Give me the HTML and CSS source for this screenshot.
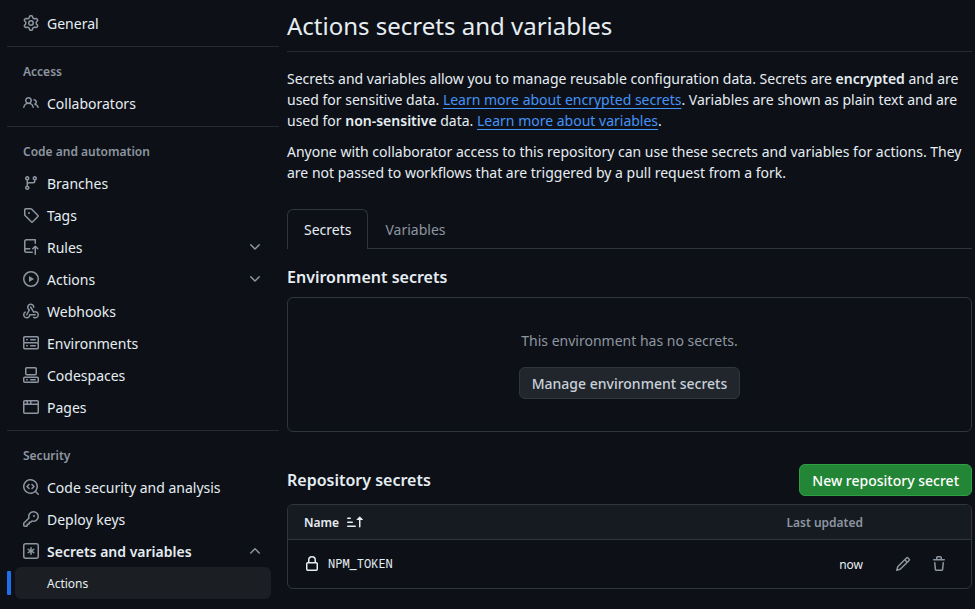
FILE: index.html
```html
<!DOCTYPE html>
<html lang="en">
<head>
<meta charset="utf-8">
<title>Actions secrets and variables</title>
<link rel="stylesheet" href="styles.css">
</head>
<body>
<div class="page">
  <nav class="sidebar">
    <ul class="group">
      <li class="item"><svg class="icon" viewBox="0 0 16 16"><path d="M8 0a8.2 8.2 0 0 1 .701.031C9.444.095 9.99.645 10.16 1.29l.288 1.107c.018.066.079.158.212.224.231.114.454.243.668.386.123.082.233.09.299.071l1.103-.303c.644-.176 1.392.021 1.82.63.27.385.506.792.704 1.218.315.675.111 1.422-.364 1.891l-.814.806c-.049.048-.098.147-.088.294.016.257.016.515 0 .772-.01.147.038.246.088.294l.814.806c.475.469.679 1.216.364 1.891a7.977 7.977 0 0 1-.704 1.217c-.428.61-1.176.807-1.82.63l-1.102-.302c-.067-.019-.177-.011-.3.071a5.909 5.909 0 0 1-.668.386c-.133.066-.194.158-.211.224l-.29 1.106c-.168.646-.715 1.196-1.458 1.26a8.006 8.006 0 0 1-1.402 0c-.743-.064-1.289-.614-1.458-1.26l-.289-1.106c-.018-.066-.079-.158-.212-.224a5.738 5.738 0 0 1-.668-.386c-.123-.082-.233-.09-.299-.071l-1.103.303c-.644.176-1.392-.021-1.82-.63a8.12 8.12 0 0 1-.704-1.218c-.315-.675-.111-1.422.363-1.891l.815-.806c.05-.048.098-.147.088-.294a6.214 6.214 0 0 1 0-.772c.01-.147-.038-.246-.088-.294l-.815-.806C.635 6.045.431 5.298.746 4.623a7.92 7.92 0 0 1 .704-1.217c.428-.61 1.176-.807 1.82-.63l1.102.302c.067.019.177.011.3-.071.214-.143.437-.272.668-.386.133-.066.194-.158.211-.224l.29-1.106C6.009.645 6.556.095 7.299.03 7.53.01 7.764 0 8 0Zm-.571 1.525c-.036.003-.108.036-.137.146l-.289 1.105c-.147.561-.549.967-.998 1.189-.173.086-.34.183-.5.29-.417.278-.97.423-1.529.27l-1.103-.303c-.109-.03-.175.016-.195.045-.22.312-.412.644-.573.99-.014.031-.021.11.059.19l.815.806c.411.406.562.957.53 1.456a4.709 4.709 0 0 0 0 .582c.032.499-.119 1.05-.53 1.456l-.815.806c-.081.08-.073.159-.059.19.162.346.353.677.573.989.02.03.085.076.195.046l1.102-.303c.56-.153 1.113-.008 1.53.27.161.107.328.204.501.29.447.222.85.629.997 1.189l.289 1.105c.029.109.101.143.137.146a6.6 6.6 0 0 0 1.142 0c.036-.003.108-.036.137-.146l.289-1.105c.147-.561.549-.967.998-1.189.173-.086.34-.183.5-.29.417-.278.97-.423 1.529-.27l1.103.303c.109.029.175-.016.195-.045.22-.313.411-.644.573-.99.014-.031.021-.11-.059-.19l-.815-.806c-.411-.406-.562-.957-.53-1.456a4.709 4.709 0 0 0 0-.582c-.032-.499.119-1.05.53-1.456l.815-.806c.081-.08.073-.159.059-.19a6.464 6.464 0 0 0-.573-.989c-.02-.03-.085-.076-.195-.046l-1.102.303c-.56.153-1.113.008-1.53-.27a4.44 4.44 0 0 0-.501-.29c-.447-.222-.85-.629-.997-1.189l-.289-1.105c-.029-.11-.101-.143-.137-.146a6.6 6.6 0 0 0-1.142 0ZM11 8a3 3 0 1 1-6 0 3 3 0 0 1 6 0ZM9.5 8a1.5 1.5 0 1 0-3.001.001A1.5 1.5 0 0 0 9.5 8Z"/></svg><span class="label">General</span></li>
    </ul>
    <h2 class="group-title">Access</h2>
    <ul class="group">
      <li class="item"><svg class="icon" viewBox="0 0 16 16"><path d="M2 5.5a3.5 3.5 0 1 1 5.898 2.549 5.508 5.508 0 0 1 3.034 4.084.75.75 0 1 1-1.482.235 4 4 0 0 0-7.9 0 .75.75 0 0 1-1.482-.236A5.507 5.507 0 0 1 3.102 8.05 3.493 3.493 0 0 1 2 5.5ZM11 4a3.001 3.001 0 0 1 2.22 5.018 5.01 5.01 0 0 1 2.56 3.012.749.749 0 0 1-.885.954.752.752 0 0 1-.549-.514 3.507 3.507 0 0 0-2.522-2.372.75.75 0 0 1-.574-.73v-.352a.75.75 0 0 1 .416-.672A1.5 1.5 0 0 0 11 5.5.75.75 0 0 1 11 4Zm-5.5-.5a2 2 0 1 0-.001 3.999A2 2 0 0 0 5.5 3.5Z"/></svg><span class="label">Collaborators</span></li>
    </ul>
    <h2 class="group-title">Code and automation</h2>
    <ul class="group">
      <li class="item"><svg class="icon" viewBox="0 0 16 16"><path d="M9.5 3.25a2.25 2.25 0 1 1 3 2.122V6A2.5 2.5 0 0 1 10 8.5H6a1 1 0 0 0-1 1v1.128a2.251 2.251 0 1 1-1.5 0V5.372a2.25 2.25 0 1 1 1.5 0v1.836A2.493 2.493 0 0 1 6 7h4a1 1 0 0 0 1-1v-.628A2.25 2.25 0 0 1 9.5 3.25Zm-6 0a.75.75 0 1 0 1.5 0 .75.75 0 0 0-1.5 0Zm8.25-.75a.75.75 0 1 0 0 1.5.75.75 0 0 0 0-1.5ZM4.25 12a.75.75 0 1 0 0 1.5.75.75 0 0 0 0-1.5Z"/></svg><span class="label">Branches</span></li>
      <li class="item"><svg class="icon" viewBox="0 0 16 16"><path d="M1 7.775V2.75C1 1.784 1.784 1 2.75 1h5.025c.464 0 .91.184 1.238.513l6.25 6.25a1.75 1.75 0 0 1 0 2.474l-5.026 5.026a1.75 1.75 0 0 1-2.474 0l-6.25-6.25A1.752 1.752 0 0 1 1 7.775Zm1.5 0c0 .066.026.13.073.177l6.25 6.25a.25.25 0 0 0 .354 0l5.025-5.025a.25.25 0 0 0 0-.354l-6.25-6.25a.25.25 0 0 0-.177-.073H2.75a.25.25 0 0 0-.25.25ZM6 5a1 1 0 1 1 0 2 1 1 0 0 1 0-2Z"/></svg><span class="label">Tags</span></li>
      <li class="item"><svg class="icon" viewBox="0 0 16 16"><path d="M1 2.5A2.5 2.5 0 0 1 3.5 0h8.75a.75.75 0 0 1 .75.75v3.5a.75.75 0 0 1-1.5 0V1.5h-8a1 1 0 0 0-1 1v6.708A2.493 2.493 0 0 1 3.5 9h3.25a.75.75 0 0 1 0 1.5H3.5a1 1 0 0 0 0 2h5.75a.75.75 0 0 1 0 1.5H3.5A2.5 2.5 0 0 1 1 11.5Zm13.23 7.79-1.224-1.224v6.184a.75.75 0 0 1-1.5 0V9.066L10.28 10.29a.75.75 0 0 1-1.06-1.061l2.505-2.504a.75.75 0 0 1 1.06 0L15.29 9.23a.751.751 0 0 1-.018 1.042.751.751 0 0 1-1.042.018Z"/></svg><span class="label">Rules</span><svg class="icon" viewBox="0 0 16 16"><path d="M12.78 5.22a.749.749 0 0 1 0 1.06l-4.25 4.25a.749.749 0 0 1-1.06 0L3.22 6.28a.749.749 0 1 1 1.06-1.06L8 8.939l3.72-3.719a.749.749 0 0 1 1.06 0Z"/></svg></li>
      <li class="item"><svg class="icon" viewBox="0 0 16 16"><path d="M8 0a8 8 0 1 1 0 16A8 8 0 0 1 8 0ZM1.5 8a6.5 6.5 0 1 0 13 0 6.5 6.5 0 0 0-13 0Zm4.879-2.773 4.264 2.559a.25.25 0 0 1 0 .428l-4.264 2.559A.25.25 0 0 1 6 10.559V5.442a.25.25 0 0 1 .379-.215Z"/></svg><span class="label">Actions</span><svg class="icon" viewBox="0 0 16 16"><path d="M12.78 5.22a.749.749 0 0 1 0 1.06l-4.25 4.25a.749.749 0 0 1-1.06 0L3.22 6.28a.749.749 0 1 1 1.06-1.06L8 8.939l3.72-3.719a.749.749 0 0 1 1.06 0Z"/></svg></li>
      <li class="item"><svg class="icon" viewBox="0 0 16 16"><path d="M5.5 4.25a2.25 2.25 0 0 1 4.5 0 .75.75 0 0 0 1.5 0 3.75 3.75 0 1 0-6.14 2.889l-2.272 4.258a.75.75 0 0 0 1.324.706L7 7.25a.75.75 0 0 0-.309-1.015A2.25 2.25 0 0 1 5.5 4.25Z"/><path d="M7.364 3.607a.75.75 0 0 1 1.03.257l2.608 4.349a3.75 3.75 0 1 1-.628 6.785.75.75 0 0 1 .752-1.299 2.25 2.25 0 1 0-.033-3.88.75.75 0 0 1-1.03-.256L7.107 4.636a.75.75 0 0 1 .257-1.03Z"/><path d="M2.9 8.776A.75.75 0 0 1 2.625 9.8 2.25 2.25 0 1 0 6 11.75a.75.75 0 0 1 .75-.751h5.5a.75.75 0 0 1 0 1.5H7.425a3.751 3.751 0 1 1-5.55-3.998.75.75 0 0 1 1.024.274Z"/></svg><span class="label">Webhooks</span></li>
      <li class="item"><svg class="icon" viewBox="0 0 16 16"><path d="M1.75 1h12.5c.966 0 1.75.784 1.75 1.75v4c0 .372-.116.717-.314 1 .198.283.314.628.314 1v4a1.75 1.75 0 0 1-1.75 1.75H1.75A1.75 1.75 0 0 1 0 12.75v-4c0-.358.109-.707.314-1a1.739 1.739 0 0 1-.314-1v-4C0 1.784.784 1 1.75 1ZM1.5 2.75v4c0 .138.112.25.25.25h12.5a.25.25 0 0 0 .25-.25v-4a.25.25 0 0 0-.25-.25H1.75a.25.25 0 0 0-.25.25Zm.25 5.75a.25.25 0 0 0-.25.25v4c0 .138.112.25.25.25h12.5a.25.25 0 0 0 .25-.25v-4a.25.25 0 0 0-.25-.25ZM7 4.75A.75.75 0 0 1 7.75 4h4.5a.75.75 0 0 1 0 1.5h-4.5A.75.75 0 0 1 7 4.75ZM7.75 10h4.5a.75.75 0 0 1 0 1.5h-4.5a.75.75 0 0 1 0-1.5ZM3 4.75A.75.75 0 0 1 3.75 4h.5a.75.75 0 0 1 0 1.5h-.5A.75.75 0 0 1 3 4.75ZM3.75 10h.5a.75.75 0 0 1 0 1.5h-.5a.75.75 0 0 1 0-1.5Z"/></svg><span class="label">Environments</span></li>
      <li class="item"><svg class="icon" viewBox="0 0 16 16"><path d="M0 11.25c0-.966.784-1.75 1.75-1.75h12.5c.966 0 1.75.784 1.75 1.75v3A1.75 1.75 0 0 1 14.25 16H1.75A1.75 1.75 0 0 1 0 14.25Zm2-9.5C2 .784 2.784 0 3.75 0h8.5C13.216 0 14 .784 14 1.75v5a1.75 1.75 0 0 1-1.75 1.75h-8.5A1.75 1.75 0 0 1 2 6.75Zm1.75-.25a.25.25 0 0 0-.25.25v5c0 .138.112.25.25.25h8.5a.25.25 0 0 0 .25-.25v-5a.25.25 0 0 0-.25-.25Zm-2 9.5a.25.25 0 0 0-.25.25v3c0 .138.112.25.25.25h12.5a.25.25 0 0 0 .25-.25v-3a.25.25 0 0 0-.25-.25Z"/><path d="M7 12.75a.75.75 0 0 1 .75-.75h4.5a.75.75 0 0 1 0 1.5h-4.5a.75.75 0 0 1-.75-.75Zm-4 0a.75.75 0 0 1 .75-.75h.5a.75.75 0 0 1 0 1.5h-.5a.75.75 0 0 1-.75-.75Z"/></svg><span class="label">Codespaces</span></li>
      <li class="item"><svg class="icon" viewBox="0 0 16 16"><path d="M0 2.75C0 1.784.784 1 1.75 1h12.5c.966 0 1.75.784 1.75 1.75v10.5A1.75 1.75 0 0 1 14.25 15H1.75A1.75 1.75 0 0 1 0 13.25ZM14.5 6h-13v7.25c0 .138.112.25.25.25h12.5a.25.25 0 0 0 .25-.25Zm-6-3.5v2h6V2.75a.25.25 0 0 0-.25-.25ZM5 2.5v2h2v-2Zm-3.25 0a.25.25 0 0 0-.25.25V4.5h2v-2Z"/></svg><span class="label">Pages</span></li>
    </ul>
    <h2 class="group-title">Security</h2>
    <ul class="group">
      <li class="item"><svg class="icon" viewBox="0 0 16 16"><path d="M8.47 4.97a.75.75 0 0 0 0 1.06L9.94 7.5 8.47 8.97a.75.75 0 1 0 1.06 1.06l2-2a.75.75 0 0 0 0-1.06l-2-2a.75.75 0 0 0-1.06 0ZM6.53 6.03a.75.75 0 0 0-1.06-1.06l-2 2a.75.75 0 0 0 0 1.06l2 2a.75.75 0 1 0 1.06-1.06L5.06 7.5l1.47-1.47Z"/><path d="M12.246 13.307a7.501 7.501 0 1 1 1.06-1.06l2.474 2.473a.749.749 0 0 1-.326 1.275.749.749 0 0 1-.734-.215ZM1.5 7.5a6.002 6.002 0 0 0 3.608 5.504 6.002 6.002 0 0 0 6.486-1.117.748.748 0 0 1 .292-.293A6 6 0 1 0 1.5 7.5Z"/></svg><span class="label">Code security and analysis</span></li>
      <li class="item"><svg class="icon" viewBox="0 0 16 16"><path d="M10.5 0a5.499 5.499 0 1 1-1.288 10.848l-.932.932a.749.749 0 0 1-.53.22H7v.75a.749.749 0 0 1-.22.53l-.5.5a.749.749 0 0 1-.53.22H5v.75a.749.749 0 0 1-.22.53l-.5.5a.749.749 0 0 1-.53.22h-2A1.75 1.75 0 0 1 0 14.25v-2c0-.199.079-.389.22-.53l4.932-4.932A5.5 5.5 0 0 1 10.5 0Zm-4 5.5c-.001.431.069.86.205 1.269a.75.75 0 0 1-.181.768L1.5 12.56v1.69c0 .138.112.25.25.25h1.69l.06-.06v-1.19a.75.75 0 0 1 .75-.75h1.19l.06-.06v-1.19a.75.75 0 0 1 .75-.75h1.19l1.023-1.025a.75.75 0 0 1 .768-.18A4 4 0 1 0 6.5 5.5ZM11 6a1 1 0 1 1 0-2 1 1 0 0 1 0 2Z"/></svg><span class="label">Deploy keys</span></li>
      <li class="item item-open"><svg class="icon" viewBox="0 0 16 16"><path d="M0 2.75A2.75 2.75 0 0 1 2.75 0h10.5A2.75 2.75 0 0 1 16 2.75v10.5A2.75 2.75 0 0 1 13.25 16H2.75A2.75 2.75 0 0 1 0 13.25ZM2.75 1.5c-.69 0-1.25.56-1.25 1.25v10.5c0 .69.56 1.25 1.25 1.25h10.5c.69 0 1.25-.56 1.25-1.25V2.75c0-.69-.56-1.25-1.25-1.25Z"/><path d="M8 4a.75.75 0 0 1 .75.75V6.7l1.69-.975a.75.75 0 0 1 .75 1.3L9.5 8l1.69.976a.75.75 0 0 1-.75 1.298L8.75 9.3v1.951a.75.75 0 0 1-1.5 0V9.299l-1.69.976a.75.75 0 0 1-.75-1.3L6.5 8l-1.69-.975a.75.75 0 0 1 .75-1.3l1.69.976V4.75A.75.75 0 0 1 8 4Z"/></svg><span class="label">Secrets and variables</span><svg class="icon" viewBox="0 0 16 16"><path d="M3.22 10.53a.749.749 0 0 1 0-1.06l4.25-4.25a.749.749 0 0 1 1.06 0l4.25 4.25a.749.749 0 1 1-1.06 1.06L8 6.811 4.28 10.53a.749.749 0 0 1-1.06 0Z"/></svg></li>
      <li class="subitem">Actions</li>
    </ul>
  </nav>

  <main class="main">
    <h1 class="title">Actions secrets and variables</h1>
    <p class="intro">Secrets and variables allow you to manage reusable configuration data. Secrets are <strong>encrypted</strong> and are used for sensitive data. <a href="#">Learn more about encrypted secrets</a>. Variables are shown as plain text and are used for <strong>non-sensitive</strong> data. <a href="#">Learn more about variables</a>.</p>
    <p class="intro">Anyone with collaborator access to this repository can use these secrets and variables for actions. They are not passed to workflows that are triggered by a pull request from a fork.</p>

    <div class="tabs">
      <div class="tab tab-selected">Secrets</div>
      <div class="tab">Variables</div>
    </div>

    <h3 class="section-title">Environment secrets</h3>
    <section class="blank">
      <p class="blank-text">This environment has no secrets.</p>
      <button class="btn">Manage environment secrets</button>
    </section>

    <div class="section-head">
      <h3 class="section-title">Repository secrets</h3>
      <button class="btn btn-primary">New repository secret</button>
    </div>
    <section class="table">
      <div class="row row-head">
        <div class="name">Name<svg class="icon" viewBox="0 0 16 16"><path d="m12.927 2.573 3 3A.25.25 0 0 1 15.75 6H13.5v6.75a.75.75 0 0 1-1.5 0V6H9.75a.25.25 0 0 1-.177-.427l3-3a.25.25 0 0 1 .354 0ZM0 12.25a.75.75 0 0 1 .75-.75h7.5a.75.75 0 0 1 0 1.5H.75a.75.75 0 0 1-.75-.75Zm0-4a.75.75 0 0 1 .75-.75h4.5a.75.75 0 0 1 0 1.5H.75A.75.75 0 0 1 0 8.25Zm0-4a.75.75 0 0 1 .75-.75h2.5a.75.75 0 0 1 0 1.5H.75A.75.75 0 0 1 0 4.25Z"/></svg></div>
        <div class="updated">Last updated</div>
        <div class="actions"></div>
      </div>
      <div class="row">
        <div class="name"><svg class="icon" viewBox="0 0 16 16"><path d="M4 4a4 4 0 0 1 8 0v2h.25c.966 0 1.75.784 1.75 1.75v5.5A1.75 1.75 0 0 1 12.25 15h-8.5A1.75 1.75 0 0 1 2 13.25v-5.5C2 6.784 2.784 6 3.75 6H4Zm8.25 3.5h-8.5a.25.25 0 0 0-.25.25v5.5c0 .138.112.25.25.25h8.5a.25.25 0 0 0 .25-.25v-5.5a.25.25 0 0 0-.25-.25ZM10.5 6V4a2.5 2.5 0 1 0-5 0v2Z"/></svg><code>NPM_TOKEN</code></div>
        <div class="updated">now</div>
        <div class="actions">
          <svg class="icon" viewBox="0 0 16 16"><path d="M11.013 1.427a1.75 1.75 0 0 1 2.474 0l1.086 1.086a1.75 1.75 0 0 1 0 2.474l-8.61 8.61c-.21.21-.47.364-.756.445l-3.251.93a.75.75 0 0 1-.927-.928l.929-3.25c.081-.286.235-.547.445-.758l8.61-8.61Zm.176 4.823L9.75 4.81l-6.286 6.287a.253.253 0 0 0-.064.108l-.558 1.953 1.953-.558a.253.253 0 0 0 .108-.064Zm1.238-3.763a.25.25 0 0 0-.354 0L10.811 3.75l1.439 1.44 1.263-1.263a.25.25 0 0 0 0-.354Z"/></svg>
          <svg class="icon" viewBox="0 0 16 16"><path d="M11 1.75V3h2.25a.75.75 0 0 1 0 1.5H2.75a.75.75 0 0 1 0-1.5H5V1.75C5 .784 5.784 0 6.75 0h2.5C10.216 0 11 .784 11 1.75ZM4.496 6.675l.66 6.6a.25.25 0 0 0 .249.225h5.19a.25.25 0 0 0 .249-.225l.66-6.6a.75.75 0 0 1 1.492.149l-.66 6.6A1.748 1.748 0 0 1 10.595 15h-5.19a1.75 1.75 0 0 1-1.741-1.575l-.66-6.6a.75.75 0 1 1 1.492-.15ZM6.5 1.75V3h3V1.75a.25.25 0 0 0-.25-.25h-2.5a.25.25 0 0 0-.25.25Z"/></svg>
        </div>
      </div>
    </section>
  </main>
</div>
</body>
</html>
```
FILE: styles.css
```css
* { box-sizing: border-box; }

body {
  margin: 0;
  height: 609px;
  overflow: hidden;
  background: #0d1117;
  color: #e6edf3;
  font: 14px/21px "Noto Sans", sans-serif;
}

h1, h2, h3, p, ul { margin: 0; padding: 0; }
ul { list-style: none; }
strong { font-weight: 600; }

.page { display: flex; gap: 8px; padding: 7px 3px 0 7px; }

.icon { flex: none; width: 16px; height: 16px; fill: #8d96a0; }

/* Sidebar */
.sidebar { flex: none; width: 272px; }
.group { padding: 0 8px; }
.group-title {
  margin-top: 7px;
  border-top: 1px solid #262b32;
  padding: 8px 16px 0;
  height: 41px;
  color: #8d96a0;
  font-size: 12px;
  font-weight: 600;
  line-height: 33px;
}
.item { display: flex; align-items: center; gap: 8px; height: 32px; padding: 0 8px; }
.label { flex: 1; padding-top: 1px; }
.item-open { font-weight: 600; }
.subitem {
  position: relative;
  height: 32px;
  padding-left: 32px;
  border-radius: 6px;
  background: #1b1f23;
  font-size: 12px;
  line-height: 33px;
}
.subitem::before {
  content: "";
  position: absolute;
  left: -8px;
  top: 4px;
  width: 4px;
  height: 24px;
  border-radius: 1px;
  background: #1f6feb;
}

/* Content */
.main { flex: 1; min-width: 0; }
.title {
  height: 45px;
  margin-bottom: 16px;
  border-bottom: 1px solid #262b32;
  font-size: 24px;
  font-weight: 400;
  line-height: 38px;
}
.intro { margin-bottom: 10px; }
.intro a {
  color: #4493f8;
  text-decoration: underline;
  text-decoration-thickness: 1px;
  text-underline-offset: 3px;
  text-decoration-skip-ink: none;
}

.tabs { display: flex; height: 40px; margin: 26px 0 16px; border-bottom: 1px solid #30363d; }
.tab { height: 40px; padding: 0 17.5px; color: #8d96a0; line-height: 42px; }
.tab-selected {
  width: 81px;
  padding: 0 16px;
  border: 1px solid #30363d;
  border-bottom: 0;
  border-radius: 6px 6px 0 0;
  background: #0d1117;
  color: #e6edf3;
  line-height: 40px;
}

.section-title { font-size: 16px; font-weight: 600; line-height: 24px; }
.blank {
  display: flex;
  flex-direction: column;
  align-items: center;
  height: 135px;
  margin: 8px 0 32px;
  padding-top: 32px;
  border: 1px solid #30363d;
  border-radius: 6px;
}
.blank-text { margin-bottom: 16px; color: #8d96a0; }

.btn {
  height: 32px;
  padding: 1px 12px 0;
  border: 1px solid #30363d;
  border-radius: 6px;
  background: #21262d;
  color: #c9d1d9;
  font: 500 14px/29px "Noto Sans", sans-serif;
}
.btn-primary { border-color: #2ea043; background: #238636; color: #fff; }
.section-head { display: flex; justify-content: space-between; align-items: center; margin-bottom: 8px; }

.table { border: 1px solid #30363d; border-radius: 6px; overflow: hidden; font-size: 12px; }
.row { display: flex; align-items: center; height: 48px; padding: 0 24px 0 16px; }
.row-head { height: 35px; border-bottom: 1px solid #30363d; background: #161b22; font-weight: 600; }
.name { display: flex; flex: 1; align-items: center; gap: 8px; }
.name .icon { fill: #e6edf3; }
.name code { font: 12px/18px "Noto Sans Mono", "DejaVu Sans Mono", monospace; }
.row-head .updated { color: #8d96a0; }
.actions { display: flex; flex: none; gap: 20px; width: 84px; padding-left: 32px; }
```
